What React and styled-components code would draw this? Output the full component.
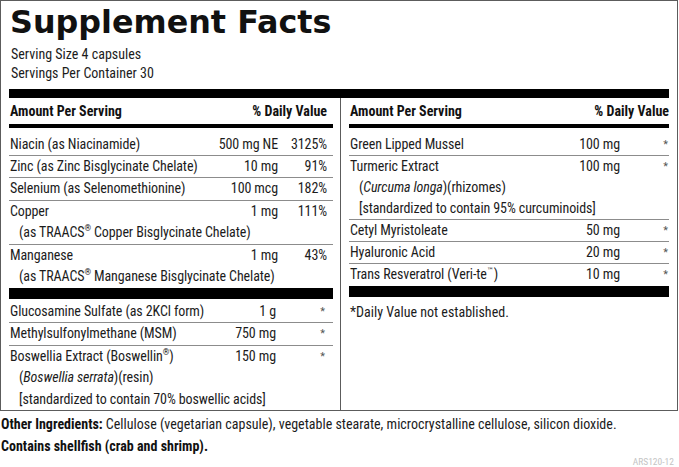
import React from 'react';
import styled, { createGlobalStyle } from 'styled-components';

const GlobalStyle = createGlobalStyle`
  html, body { margin: 0; padding: 0; background: #fff; }
  body {
    font-family: "Roboto Condensed", "Noto Sans", "DejaVu Sans", sans-serif;
    font-stretch: condensed;
    color: #1c1c1c;
  }
  * { box-sizing: border-box; }
`;

const Page = styled.div`
  width: 679px;
  height: 467px;
  overflow: hidden;
  background: #fff;
  display: flex;
  flex-direction: column;
`;

const Frame = styled.section`
  width: 678px;
  height: 411px;
  border: 1px solid #5c5c5c;
  display: flex;
  flex-direction: column;
`;

const Title = styled.h1`
  margin: 0;
  padding: 4px 0 0 9px;
  font-family: "DejaVu Sans", "Liberation Sans", sans-serif;
  font-stretch: normal;
  font-weight: 700;
  font-size: 31.8px;
  line-height: 34px;
  color: #111;
`;

const Serving = styled.div`
  margin-top: 6px;
  padding-left: 10px;
  font-size: 14px;
  line-height: 19px;
`;

const TopBar = styled.div`
  height: 10px;
  margin: 6px 8px 0 8px;
  background: #000;
`;

const Columns = styled.div`
  flex: 1;
  display: grid;
  grid-template-columns: 340px 1fr;
`;

const Column = styled.div`
  display: flex;
  flex-direction: column;
  padding: 0 ${p => p.$padRight}px 0 8px;
  border-right: ${p => (p.$divider ? '1px solid #5c5c5c' : 'none')};
`;

const Header = styled.div`
  height: 30px;
  display: flex;
  align-items: center;
  justify-content: space-between;
  padding: 0 ${p => p.$padRight}px 0 1px;
  font-weight: 700;
  font-size: 14px;
  border-bottom: 4px solid #000;
  color: #111;
`;

const Group = styled.div`
  padding: ${p => p.$top}px 0 ${p => p.$bottom}px 0;
`;

const Row = styled.div`
  display: grid;
  grid-template-columns: 1fr 70px ${p => p.$dvWidth}px;
  padding: 0 ${p => p.$padRight}px 0 1px;
  font-size: 14px;
  letter-spacing: -0.1px;
  line-height: ${p => p.$lh}px;
  border-bottom: 1px solid #8c8c8c;
  &:last-child { border-bottom: none; }
`;

const Name = styled.span`
  white-space: nowrap;
`;

const Amount = styled.span`
  text-align: right;
  white-space: nowrap;
`;

const Dv = styled.span`
  text-align: right;
  white-space: nowrap;
  font-size: ${p => (p.$star ? '11px' : 'inherit')};
  color: ${p => (p.$star ? '#555' : 'inherit')};
`;

const Sub = styled.div`
  grid-column: 1 / -1;
  padding-left: 9px;
  white-space: nowrap;
`;

const Sup = styled.sup`
  font-size: 0.6em;
  line-height: 0;
  vertical-align: 0.75em;
`;

const Tm = styled.sup`
  font-family: "DejaVu Sans", sans-serif;
  font-stretch: condensed;
  font-size: 0.55em;
  line-height: 0;
  vertical-align: 0.8em;
`;

const ThickBar = styled.div`
  height: 11px;
  background: #000;
`;

const Note = styled.div`
  padding: 5px 0 0 1px;
  font-size: 14px;
  line-height: 21px;
`;

const Footer = styled.div`
  flex: 1;
  display: flex;
  flex-direction: column;
  padding: 2px 0 0 1px;
  font-size: 14px;
  line-height: 22px;
`;

const FootLine = styled.p`
  margin: 0;
  white-space: nowrap;
`;

const Bold = styled.b`
  font-weight: 700;
  color: #111;
`;

const Code = styled.div`
  align-self: flex-end;
  margin-right: 5px;
  font-size: 9.5px;
  line-height: 10px;
  color: #c4c4c4;
`;

const leftTop = [
  { name: 'Niacin (as Niacinamide)', amt: '500 mg NE', dv: '3125%' },
  { name: 'Zinc (as Zinc Bisglycinate Chelate)', amt: '10 mg', dv: '91%' },
  { name: 'Selenium (as Selenomethionine)', amt: '100 mcg', dv: '182%' },
  {
    name: 'Copper', amt: '1 mg', dv: '111%',
    sub: [<>(as TRAACS<Sup>®</Sup> Copper Bisglycinate Chelate)</>],
  },
  {
    name: 'Manganese', amt: '1 mg', dv: '43%',
    sub: [<>(as TRAACS<Sup>®</Sup> Manganese Bisglycinate Chelate)</>],
  },
];

const leftBottom = [
  { name: 'Glucosamine Sulfate (as 2KCl form)', amt: '1 g', dv: '*' },
  { name: 'Methylsulfonylmethane (MSM)', amt: '750 mg', dv: '*' },
  {
    name: <>Boswellia Extract (Boswellin<Sup>®</Sup>)</>, amt: '150 mg', dv: '*',
    sub: [
      <>(<i>Boswellia serrata</i>)(resin)</>,
      <>[standardized to contain 70% boswellic acids]</>,
    ],
  },
];

const right = [
  { name: 'Green Lipped Mussel', amt: '100 mg', dv: '*' },
  {
    name: 'Turmeric Extract', amt: '100 mg', dv: '*',
    sub: [
      <>(<i>Curcuma longa</i>)(rhizomes)</>,
      <>[standardized to contain 95% curcuminoids]</>,
    ],
  },
  { name: 'Cetyl Myristoleate', amt: '50 mg', dv: '*' },
  { name: 'Hyaluronic Acid', amt: '20 mg', dv: '*' },
  { name: <>Trans Resveratrol (Veri-te<Tm>™</Tm>)</>, amt: '10 mg', dv: '*' },
];

function Rows({ items, dvWidth, padRight, lh }) {
  return items.map((it, i) => (
    <Row key={i} $dvWidth={dvWidth} $padRight={padRight} $lh={lh}>
      <Name>{it.name}</Name>
      <Amount>{it.amt}</Amount>
      <Dv $star={it.dv === '*'}>{it.dv}</Dv>
      {(it.sub || []).map((s, j) => (
        <Sub key={j}>{s}</Sub>
      ))}
    </Row>
  ));
}

export default function App() {
  return (
    <Page>
      <GlobalStyle />
      <Frame>
        <Title>Supplement Facts</Title>
        <Serving>
          Serving Size 4 capsules
          <br />
          Servings Per Container 30
        </Serving>
        <TopBar />
        <Columns>
          <Column $divider $padRight={7}>
            <Header $padRight={6}>
              <span>Amount Per Serving</span>
              <span>% Daily Value</span>
            </Header>
            <Group $top={6} $bottom={0}>
              <Rows items={leftTop} dvWidth={49} padRight={6} lh={21.4} />
            </Group>
            <ThickBar />
            <Group $top={2} $bottom={0}>
              <Rows items={leftBottom} dvWidth={49} padRight={8} lh={21.5} />
            </Group>
          </Column>
          <Column $padRight={8}>
            <Header $padRight={0}>
              <span>Amount Per Serving</span>
              <span>% Daily Value</span>
            </Header>
            <Group $top={6.5} $bottom={1}>
              <Rows items={right} dvWidth={48} padRight={1} lh={21} />
            </Group>
            <ThickBar />
            <Note>*Daily Value not established.</Note>
          </Column>
        </Columns>
      </Frame>
      <Footer>
        <FootLine>
          <Bold>Other Ingredients:</Bold> Cellulose (vegetarian capsule), vegetable stearate, microcrystalline cellulose, silicon dioxide.
        </FootLine>
        <FootLine>
          <Bold>Contains shellfish (crab and shrimp).</Bold>
        </FootLine>
        <Code>ARS120-12</Code>
      </Footer>
    </Page>
  );
}
